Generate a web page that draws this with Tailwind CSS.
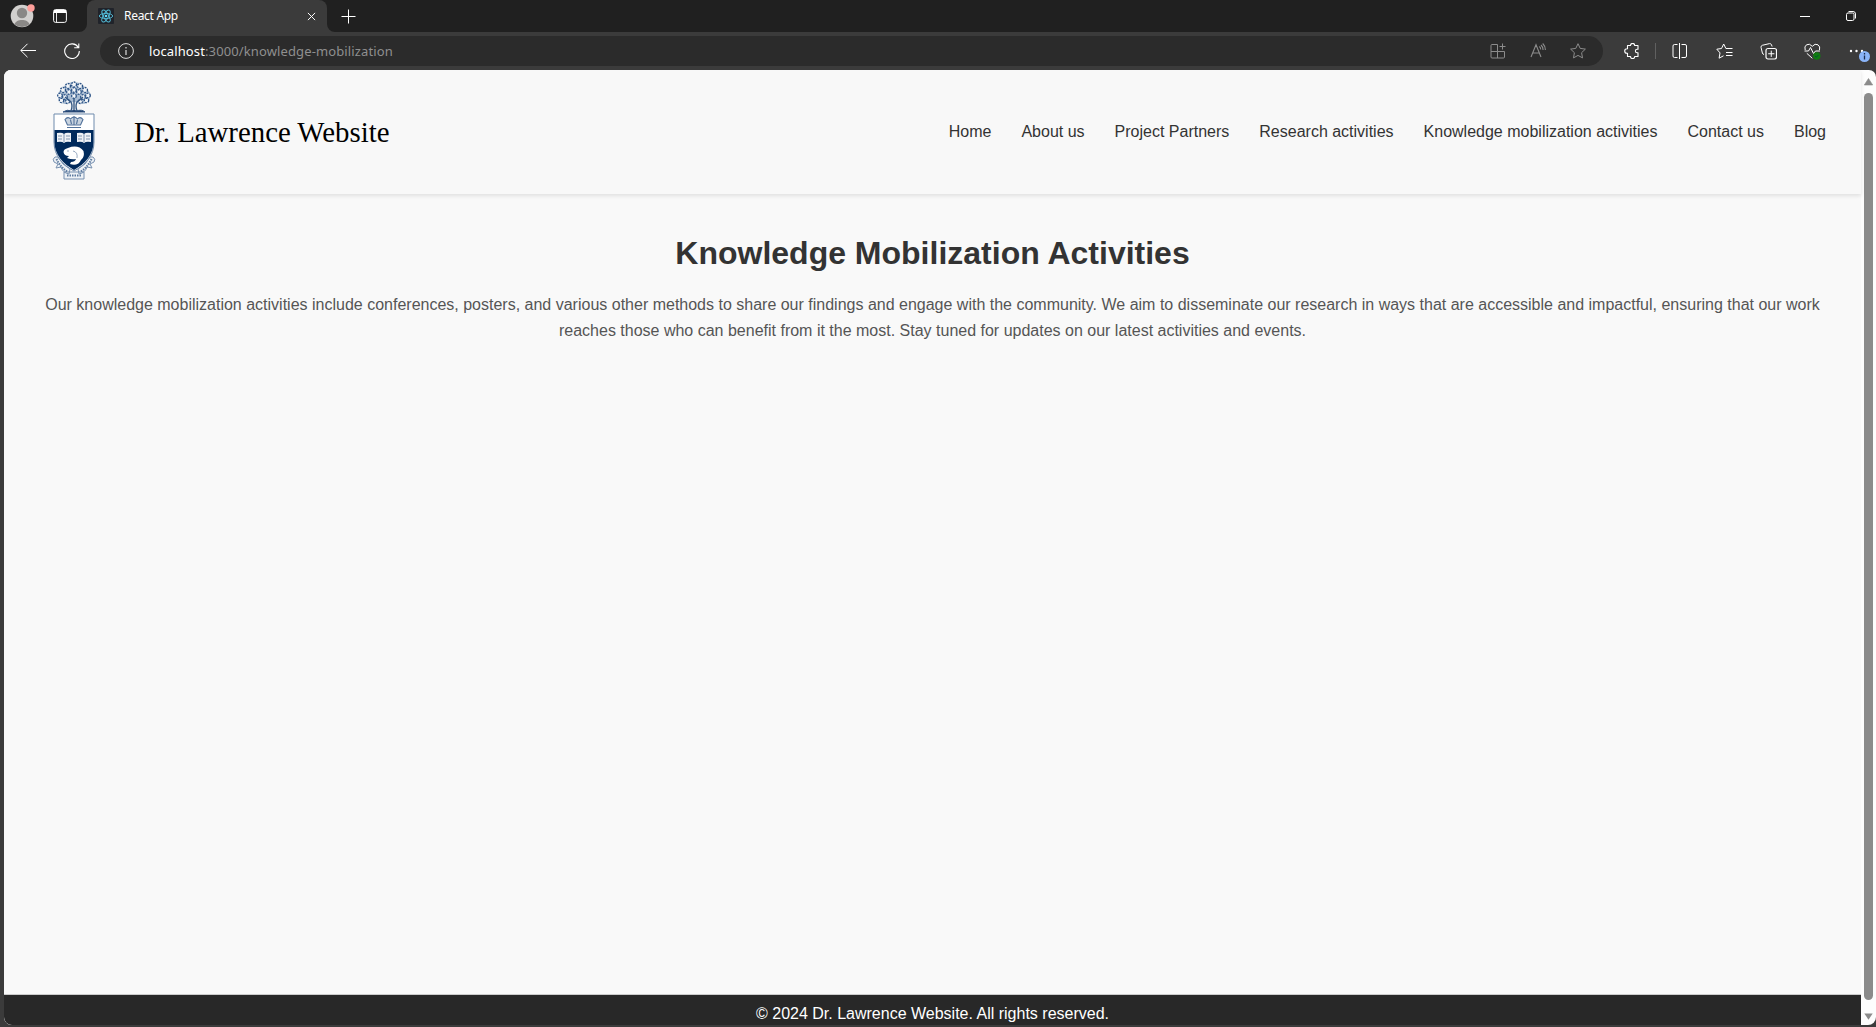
<!DOCTYPE html>
<html lang="en">
<head>
<meta charset="utf-8">
<title>React App</title>
<script src="https://cdn.jsdelivr.net/npm/@tailwindcss/browser@4"></script>
</head>
<body class="h-[1027px] w-[1876px] overflow-hidden bg-[#3b3b3b] flex flex-col font-['Noto_Sans',sans-serif]">
<!-- Tab strip -->
<div class="h-8 shrink-0 flex bg-[#202020] text-white">
  <div class="w-[87px] flex items-center pl-[10px] gap-[19px]">
    <svg class="size-6 overflow-visible" viewBox="0 0 24 24"><circle cx="12" cy="12" r="11.3" fill="#d2d0ce"/><circle cx="12" cy="9" r="5.2" fill="#8a8886"/><path d="M4.500 20.200C6 14.500 18 14.500 19.500 20.200A11.300 11.300 0 0 1 4.500 20.200Z" fill="#8a8886"/><circle cx="21" cy="4" r="3.700" fill="#ff9f9b"/></svg>
    <svg class="size-[14px]" viewBox="0 0 14 14" fill="none" stroke="#fff"><rect x=".6" y=".6" width="12.800" height="12.800" rx="2"/><path d="M1 2.500h12" stroke-width="3"/><path d="M3.500 4v9" stroke-width=".9"/></svg>
  </div>
  <div class="w-[240px] rounded-t-lg bg-[#3b3b3b] flex items-center pl-[11px] relative">
    <svg class="size-4" viewBox="0 0 16 16"><rect width="16" height="16" rx="1" fill="#20232a"/><g fill="none" stroke="#53bcd8" stroke-width=".9"><ellipse cx="8" cy="8" rx="6.700" ry="2.600"/><ellipse cx="8" cy="8" rx="6.700" ry="2.600" transform="rotate(60 8 8)"/><ellipse cx="8" cy="8" rx="6.700" ry="2.600" transform="rotate(120 8 8)"/></g><circle cx="8" cy="8" r="1.300" fill="#61dafb"/></svg>
    <span class="ml-[10px] text-[12px] leading-4 tracking-[-0.3px]">React App</span>
    <svg class="ml-auto mr-[11px] mt-px size-[9px]" viewBox="0 0 10 10" stroke="#fff" stroke-width="1.100"><path d="M1 1l8 8M9 1l-8 8"/></svg>
    <svg class="absolute -left-2 bottom-0 size-2" viewBox="0 0 8 8"><path d="M8 0v8H0A8 8 0 0 0 8 0" fill="#3b3b3b"/></svg>
    <svg class="absolute -right-2 bottom-0 size-2" viewBox="0 0 8 8"><path d="M0 0v8h8A8 8 0 0 1 0 0" fill="#3b3b3b"/></svg>
  </div>
  <div class="flex-1 flex items-center pl-[14px] pr-5">
    <svg class="size-[15px]" viewBox="0 0 15 15" stroke="#fff"><path d="M7.500 .5v14M.5 7.500h14"/></svg>
    <svg class="ml-auto h-[10px] w-[10px]" viewBox="0 0 10 10" stroke="#fff"><path d="M0 5.500h10"/></svg>
    <svg class="ml-[36px] size-[10px]" viewBox="0 0 10 10" fill="none" stroke="#fff"><rect x=".5" y="2" width="7.500" height="7.500" rx="1.500"/><path d="M2.500 .5H7a2.500 2.500 0 0 1 2.500 2.500v4.500"/></svg>
  </div>
</div>
<!-- Toolbar -->
<div class="h-[38px] shrink-0 flex items-center pl-5 pb-0">
  <svg class="size-4" viewBox="0 0 16 16" fill="none" stroke="#fff"><path d="M16 7.500H.8M7.500 .8L.8 7.500l6.700 6.700"/></svg>
  <svg class="ml-[28px] size-4" viewBox="0 0 16 16" fill="none" stroke="#fff" stroke-width="1.100"><path d="M14.300 4.500A7.300 7.300 0 1 0 15.300 8M14.800 .5v4.300h-4.600"/></svg>
  <div class="ml-5 w-[1503px] h-[30px] rounded-full bg-[#2b2b2b] flex items-center pl-[18px] pr-[17px]">
    <svg class="size-4" viewBox="0 0 16 16" fill="none" stroke="#ddd"><circle cx="8" cy="8" r="7.400"/><path d="M8 7v5M8 4v1.500" stroke-width="1.200"/></svg>
    <span class="ml-[15px] text-[13px] leading-5 text-[#8f8f8f] tracking-[0.12px]"><span class="text-white">localhost</span>:3000/knowledge-mobilization</span>
    <div class="ml-auto flex items-center gap-6">
      <svg class="size-4" viewBox="0 0 16 16" fill="none" stroke="#8c8c8c"><path d="M7.500 1.500H2a1 1 0 0 0-1 1V14a1 1 0 0 0 1 1h11.500a1 1 0 0 0 1-1V8.500H1M7.500 1.500V15M12.500 .5v6M9.500 3.500h6"/></svg>
      <svg class="size-4" viewBox="0 0 16 16" fill="none" stroke="#8c8c8c" stroke-width="1.100"><path d="M1 14L6 1.800 11 14M2.700 10h6.600M9.300 3.500q1.400 1 1.400 3M11 2q2 1.700 2.100 5M12.700 .5q2.700 2.500 2.700 6.500"/></svg>
      <svg class="size-4" viewBox="0 0 16 16" fill="none" stroke="#8c8c8c" stroke-linejoin="round"><path d="M8 .7l2.200 4.700 5.200.7-3.800 3.600.9 5.200L8 12.400l-4.500 2.500.9-5.200L.6 6.100l5.200-.7z"/></svg>
    </div>
  </div>
  <svg class="ml-[21px] size-4" viewBox="0 0 16 16" fill="none" stroke="#fff" stroke-width="1.100" stroke-linejoin="round"><path d="M3.500 2.500h3a2.100 2.100 0 0 1 4.200 0H14v3.700h-.8a1.800 1.800 0 0 0 0 3.600h.8v3.700h-3.300a2.100 2.100 0 0 1-4.200 0h-3V10.300H3a2.300 2.300 0 0 1 0-4.600h.5z"/></svg>
  <div class="ml-[15px] h-4 w-px bg-[#606060]"></div>
  <svg class="ml-[16px] size-4" viewBox="0 0 16 16" fill="none" stroke="#fff"><path d="M5.500 1.500h-3A1.500 1.500 0 0 0 1 3v10a1.500 1.500 0 0 0 1.500 1.500h3M9.500 1.500h3.500A1.500 1.500 0 0 1 14.500 3v10a1.500 1.500 0 0 1-1.500 1.500H9.500M7.500 0v16"/></svg>
  <svg class="ml-[28px] size-[17px]" viewBox="0 0 17 17" fill="none" stroke="#fff" stroke-linejoin="round"><path d="M7.500 12.800l-4.400 2.400.9-5.300L.8 6.200l4.700-.7L7.700 1l2.200 4.500h6.600M10 9.500h6.500M10 12.500h6.500"/></svg>
  <svg class="ml-[27px] size-[17px]" viewBox="0 0 17 17" fill="none" stroke="#fff"><rect x="6" y="5.500" width="10.500" height="10.500" rx="2" stroke-width="1.200"/><path d="M11.250 7.700v6.200M8.200 10.750h6.200M4 11.500q-1.300-.2-1.600-1.500L1 4.300Q.8 2.800 2.300 2.300L9.500 .6q1.500-.2 2 1.200l.6 1.700"/></svg>
  <svg class="ml-[27px] size-[17px]" viewBox="0 0 17 17" fill="none" stroke="#fff"><path d="M1.200 7Q0 3.500 2.500 1.800 5.500 0 8.300 3.300 11 0 14 1.800 16.500 3.500 15.500 7M.5 8h4l2-3.500 3 6L11.500 8H16M2.800 10.300l5.500 5"/><circle cx="12.800" cy="13" r="3.700" fill="#107c10" stroke="none"/><path d="M11 13l1.300 1.200 2.400-2.400" stroke="#053"/></svg>
  <svg class="ml-[28px] h-[22px] w-[22px] shrink-0" viewBox="0 0 22 22"><g fill="#fff"><circle cx="2" cy="11" r="1.200"/><circle cx="7.500" cy="11" r="1.200"/><circle cx="13" cy="11" r="1.200"/></g><circle cx="15.500" cy="16.500" r="5.500" fill="#8ab4f8"/><path d="M15.500 15.500v4M15.500 13v1.500" stroke="#1d2e50" stroke-width="1.300"/></svg>
</div>
<!-- Page viewport -->
<div class="ml-1 flex-1 min-h-0 flex rounded-t-[7px] rounded-b-lg overflow-hidden bg-[#fdfdfd] mb-[2px] font-['Liberation_Sans',sans-serif]">
  <div class="w-[1857px] flex flex-col bg-[#f9f9f9]">
    <header class="h-[124px] shrink-0 bg-[#f8f8f8] shadow-[0_2px_4px_rgba(0,0,0,0.1)] flex items-center pl-[48px] pr-[35px] relative">
      <svg class="w-[44px] h-[100px] -mt-[2px]" viewBox="0 0 44 100" fill="none" stroke="#365985" stroke-width="1">
        <!-- oak tree -->
        <path d="M10 8q4-7 12-7t12 7q6 3 4 9-1 6-8 6l-8-2-9 2q-7-1-7-7-1-5 4-8z" fill="#a9bcd2" stroke="none"/>
        <g fill="#f2f5f8" stroke="#2c5386" stroke-width="1.300" stroke-dasharray="1.800 1"><circle cx="22" cy="3.500" r="2.500"/><circle cx="16" cy="5" r="2.500"/><circle cx="28" cy="5" r="2.500"/><circle cx="11" cy="9" r="2.500"/><circle cx="33" cy="9" r="2.500"/><circle cx="22" cy="9" r="2.300"/><circle cx="17" cy="11" r="2.300"/><circle cx="27" cy="11" r="2.300"/><circle cx="8" cy="14.500" r="2.300"/><circle cx="36" cy="14.500" r="2.300"/><circle cx="13" cy="16" r="2.300"/><circle cx="31" cy="16" r="2.300"/><circle cx="9.500" cy="19.500" r="2.200"/><circle cx="34.500" cy="19.500" r="2.200"/><circle cx="22" cy="15" r="2.300"/><circle cx="15.500" cy="20.500" r="2"/><circle cx="28.500" cy="20.500" r="2"/></g>
        <path d="M19 30q2-5 0-9l-6-5M25 30q-2-5 0-9l6-5M22 28V17" stroke-width="1.400"/>
        <path d="M11 31q4-3 9-1l2-1.500 2 1.500q6-2 9 1z" fill="#123262"/>
        <!-- motto ribbon -->
        <path d="M3 76q-3 2-1 5l4 2-2 4 5-1q2 6 8 7l1-5Q10 84 6 76zM41 76q3 2 1 5l-4 2 2 4-5-1q-2 6-8 7l-1-5q8-4 12-12zM12 91h20v7H12z" fill="#eef2f6" stroke="#7891b0"/>
        <path d="M4.500 78Q8 86 16 91M39.500 78Q36 86 28 91M15 94.500h14" stroke-dasharray="1.500 1" stroke-width="2" stroke="#5c7a9f"/>
        <!-- shield -->
        <path d="M2 33h40v28c0 14-9 23-20 29C11 84 2 75 2 61z" fill="#fff" stroke="#6f8bad"/>
        <path d="M2.500 49h39v12c0 13-9 22-19.500 28C11.500 83 2.500 74 2.500 61z" fill="#002a5c" stroke="none"/>
        <path d="M15.500 44L13 38.500q3-3.500 5.500-.5 3.500-4 7 0 2.500-3 5.500.5L28.500 44zM15 46.500h14M22 35v9M18.500 39l1 4M25.500 39l-1 4" fill="#c8d3df" stroke="#52729b" stroke-width="1.100"/>
        <path d="M5 52q5-1 7 1 2-2 7-1v9q-5-1-7 1-2-2-7-1zM25 52q5-1 7 1 2-2 7-1v9q-5-1-7 1-2-2-7-1z" fill="#eef2f7" stroke="none"/>
        <path d="M12 53v8M32 53v8M6 55h4M6 58h4M14 55h4M14 58h4M26 55h4M26 58h4M34 55h4M34 58h4" stroke-width=".6"/>
        <path d="M11.500 71q0-3 4.500-4 10-4 15.500 3 1.500 6-2.500 9-2 4-5 4.500-3 .5-6-.5l1-2q4 0 5-3-4 1-9-1l2-2q-5 0-5.500-4z" fill="#fff" stroke="none"/>
        <path d="M21 70q5 1 4 7M15 70h2" stroke-width=".5"/>
      </svg>
      <span class="ml-[38px] text-[28.8px] leading-8 text-black font-['Liberation_Serif',serif]">Dr. Lawrence Website</span>
      <nav class="ml-auto flex gap-[30px] text-base text-[#333] whitespace-nowrap">
        <a>Home</a><a>About us</a><a>Project Partners</a><a>Research activities</a><a>Knowledge mobilization activities</a><a>Contact us</a><a>Blog</a>
      </nav>
    </header>
    <main class="flex-1 px-10 pt-[41px] text-center">
      <h1 class="text-[32px] leading-[37px] font-bold text-[#333]">Knowledge Mobilization Activities</h1>
      <p class="mt-5 text-base leading-[25.6px] text-[#555]">Our knowledge mobilization activities include conferences, posters, and various other methods to share our findings and engage with the community. We aim to disseminate our research in ways that are accessible and impactful, ensuring that our work reaches those who can benefit from it the most. Stay tuned for updates on our latest activities and events.</p>
    </main>
    <footer class="h-[31px] shrink-0 border-t border-[#ccc] bg-[#282828] text-white text-center text-base leading-[38px] overflow-hidden">© 2024 Dr. Lawrence Website. All rights reserved.</footer>
  </div>
  <div class="w-[15px] flex flex-col items-center pt-[8px] pb-[5px]">
    <svg class="h-[8px] w-[9px]" viewBox="0 0 9 8"><path d="M4.500 .5L8.700 7H.3z" fill="#8b8b8b" stroke="#8b8b8b" stroke-linejoin="round" stroke-width=".6"/></svg>
    <div class="mt-[7px] mb-[13px] flex-1 w-[9px] rounded-full bg-[#8b8b8b]"></div>
    <svg class="h-[7px] w-[9px]" viewBox="0 0 9 7"><path d="M.3 .5h8.400L4.500 6.700z" fill="#8b8b8b"/></svg>
  </div>
</div>
</body>
</html>
